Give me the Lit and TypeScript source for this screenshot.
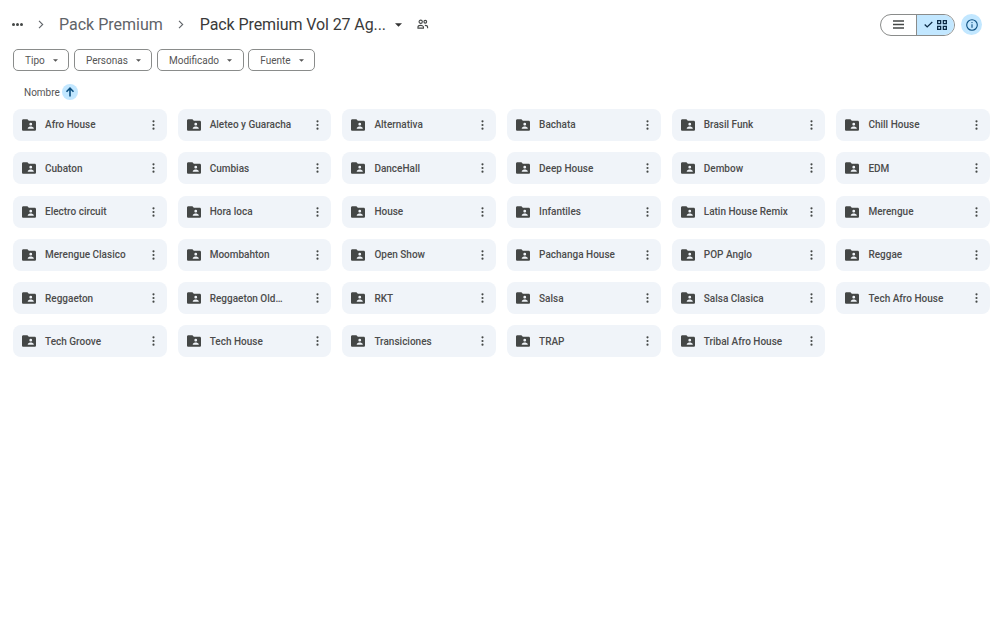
import { LitElement, html, css, svg } from "lit";
import { customElement } from "lit/decorators.js";

const NAMES = [
  "Afro House", "Aleteo y Guaracha", "Alternativa", "Bachata", "Brasil Funk", "Chill House",
  "Cubaton", "Cumbias", "DanceHall", "Deep House", "Dembow", "EDM",
  "Electro circuit", "Hora loca", "House", "Infantiles", "Latin House Remix", "Merengue",
  "Merengue Clasico", "Moombahton", "Open Show", "Pachanga House", "POP Anglo", "Reggae",
  "Reggaeton", "Reggaeton Old…", "RKT", "Salsa", "Salsa Clasica", "Tech Afro House",
  "Tech Groove", "Tech House", "Transiciones", "TRAP", "Tribal Afro House",
];
const FILTERS = ["Tipo", "Personas", "Modificado", "Fuente"];

const caret = html`<svg class="caret" width="5" height="3" viewBox="0 0 6 3"><path d="M0 0h6L3 3z" fill="currentColor"/></svg>`;
const chev = html`<svg class="chev" width="6" height="9" viewBox="0 0 6 9"><path d="M1 .8l3.700 3.700L1 8.200" fill="none" stroke="#5f6368" stroke-width="1.100"/></svg>`;
const folder = svg`<svg class="folder" width="14" height="12" viewBox="0 0 16 13"><path fill="#444746" fill-rule="evenodd" d="M1.500 0h4.700l1.600 1.600h6.700c.8 0 1.500.7 1.500 1.500v8.400c0 .8-.7 1.500-1.500 1.500h-13C.7 13 0 12.300 0 11.500v-10C0 .7.7 0 1.500 0zM10 3.900a1.600 1.600 0 1 0 0 3.200 1.600 1.600 0 0 0 0-3.200zM6.600 10.900h6.800v-1c0-1.100-2.300-1.800-3.400-1.800s-3.400.7-3.400 1.800z"/></svg>`;
const more = html`<svg class="more" width="3" height="10" viewBox="0 0 3 11"><g fill="#444746"><circle cx="1.500" cy="1.500" r="1.200"/><circle cx="1.500" cy="5.500" r="1.200"/><circle cx="1.500" cy="9.500" r="1.200"/></g></svg>`;

@customElement("app-root")
export class AppRoot extends LitElement {
  static styles = css`
    :host { display: block; width: 1000px; height: 626px; background: #fff; overflow: hidden;
      font-family: Roboto, "Liberation Sans", sans-serif; color: #444746; }
    .top { height: 49px; display: flex; align-items: center; padding: 0 18px 0 12px; box-sizing: border-box; }
    .dots { display: flex; gap: 1px; width: 11px; }
    .dots i { width: 3px; height: 3px; border-radius: 50%; background: #444746; }
    .chev { margin-left: 15px; flex: none; }
    .crumb { font-size: 16px; color: #5f6368; margin-left: 15px; }
    .current { font-size: 16px; color: #3a3a3a; margin-left: 16px; letter-spacing: -0.100px; }
    .top .caret { margin-left: 9px; width: 7px; height: 4px; color: #333; }
    .people { margin-left: 15px; }
    .spacer { flex: 1; }
    .toggle { display: flex; width: 73px; height: 20px; border: 1px solid #8a8c8b; border-radius: 11px; overflow: hidden; }
    .toggle div { display: flex; align-items: center; justify-content: center; }
    .list { width: 35px; }
    .grid-btn { flex: 1; background: #c2e7ff; border-left: 1px solid #8a8c8b; gap: 4px; }
    .info { margin-left: 6px; width: 21px; height: 21px; border-radius: 50%; background: #c2e7ff; display: flex; align-items: center; justify-content: center; }
    .filters { display: flex; gap: 4.700px; padding-left: 13px; height: 22px; }
    .filter { display: flex; align-items: center; border: 1px solid #8a8c8b; border-radius: 5px; padding: 0 10.200px 0 11px; gap: 8.300px; font-size: 10px; color: #555; box-sizing: border-box; height: 22px; }
    .sort { display: flex; align-items: center; height: 18px; margin-top: 12px; padding-left: 24px; font-size: 10px; gap: 2px; color: #555; }
    .arrow { width: 16px; height: 16px; border-radius: 50%; background: #c2e7ff; display: flex; align-items: center; justify-content: center; }
    .grid { display: grid; grid-template-columns: repeat(6, 153.500px); column-gap: 11.200px; row-gap: 11.300px; padding: 8px 0 0 13px; }
    .card { height: 32px; background: #f0f4f9; border-radius: 8px; display: flex; align-items: center; padding-left: 9px; padding-right: 12px; box-sizing: border-box; }
    .folder { flex: none; }
    .name { flex: 1; margin-left: 9px; font-size: 10px; font-weight: 500; color: #4c4c4c; white-space: nowrap; position: relative; top: -0.200px; }
  `;

  render() {
    return html`
      <div class="top">
        <div class="dots"><i></i><i></i><i></i></div>
        ${chev}
        <span class="crumb">Pack Premium</span>
        ${chev}
        <span class="current">Pack Premium Vol 27 Ag...</span>
        ${caret}
        <svg class="people" width="12" height="11" viewBox="0 0 13 12"><g fill="none" stroke="#444746" stroke-width="1.200"><circle cx="4" cy="3" r="1.800"/><circle cx="9" cy="3" r="1.500"/><path d="M1 10V8.800c0-1 1.500-1.800 3-1.800s3 .8 3 1.800V10zM8.500 7c1.500 0 3 .6 3 1.800V10"/></g></svg>
        <div class="spacer"></div>
        <div class="toggle">
          <div class="list"><svg width="11" height="9" viewBox="0 0 11 9"><path d="M0 1h11M0 4.500h11M0 8h11" stroke="#444746" stroke-width="1.300"/></svg></div>
          <div class="grid-btn">
            <svg width="9" height="7" viewBox="0 0 9 7"><path d="M.7 3.500l2.500 2.500L8.300 1" fill="none" stroke="#0b2a45" stroke-width="1.200"/></svg>
            <svg width="10" height="10" viewBox="0 0 10 10"><g fill="#0b2a45"><path fill-rule="evenodd" d="M0 0h4.300v4.300H0zM1.300 1.300v1.700h1.700V1.300zM5.700 0H10v4.300H5.700zM7 1.300v1.700h1.700V1.300zM0 5.700h4.300V10H0zM1.300 7v1.700h1.700V7zM5.700 5.700H10V10H5.700zM7 7v1.700h1.700V7z"/></g></svg>
          </div>
        </div>
        <div class="info"><svg width="12" height="12" viewBox="0 0 12 12"><circle cx="6" cy="6" r="5.300" fill="none" stroke="#0b4f80" stroke-width="1.100"/><path d="M6 5.300v3.400" stroke="#0b4f80" stroke-width="1.100"/><circle cx="6" cy="3.600" r=".7" fill="#0b4f80"/></svg></div>
      </div>
      <div class="filters">
        ${FILTERS.map((f) => html`<div class="filter">${f}${caret}</div>`)}
      </div>
      <div class="sort">Nombre
        <span class="arrow"><svg width="10" height="10" viewBox="0 0 10 10"><path d="M5 9.500V1.200M1.500 4.700L5 1.200l3.500 3.500" fill="none" stroke="#0b4f80" stroke-width="1.600"/></svg></span>
      </div>
      <div class="grid">
        ${NAMES.map((n) => html`<div class="card">${folder}<span class="name">${n}</span>${more}</div>`)}
      </div>
    `;
  }
}
